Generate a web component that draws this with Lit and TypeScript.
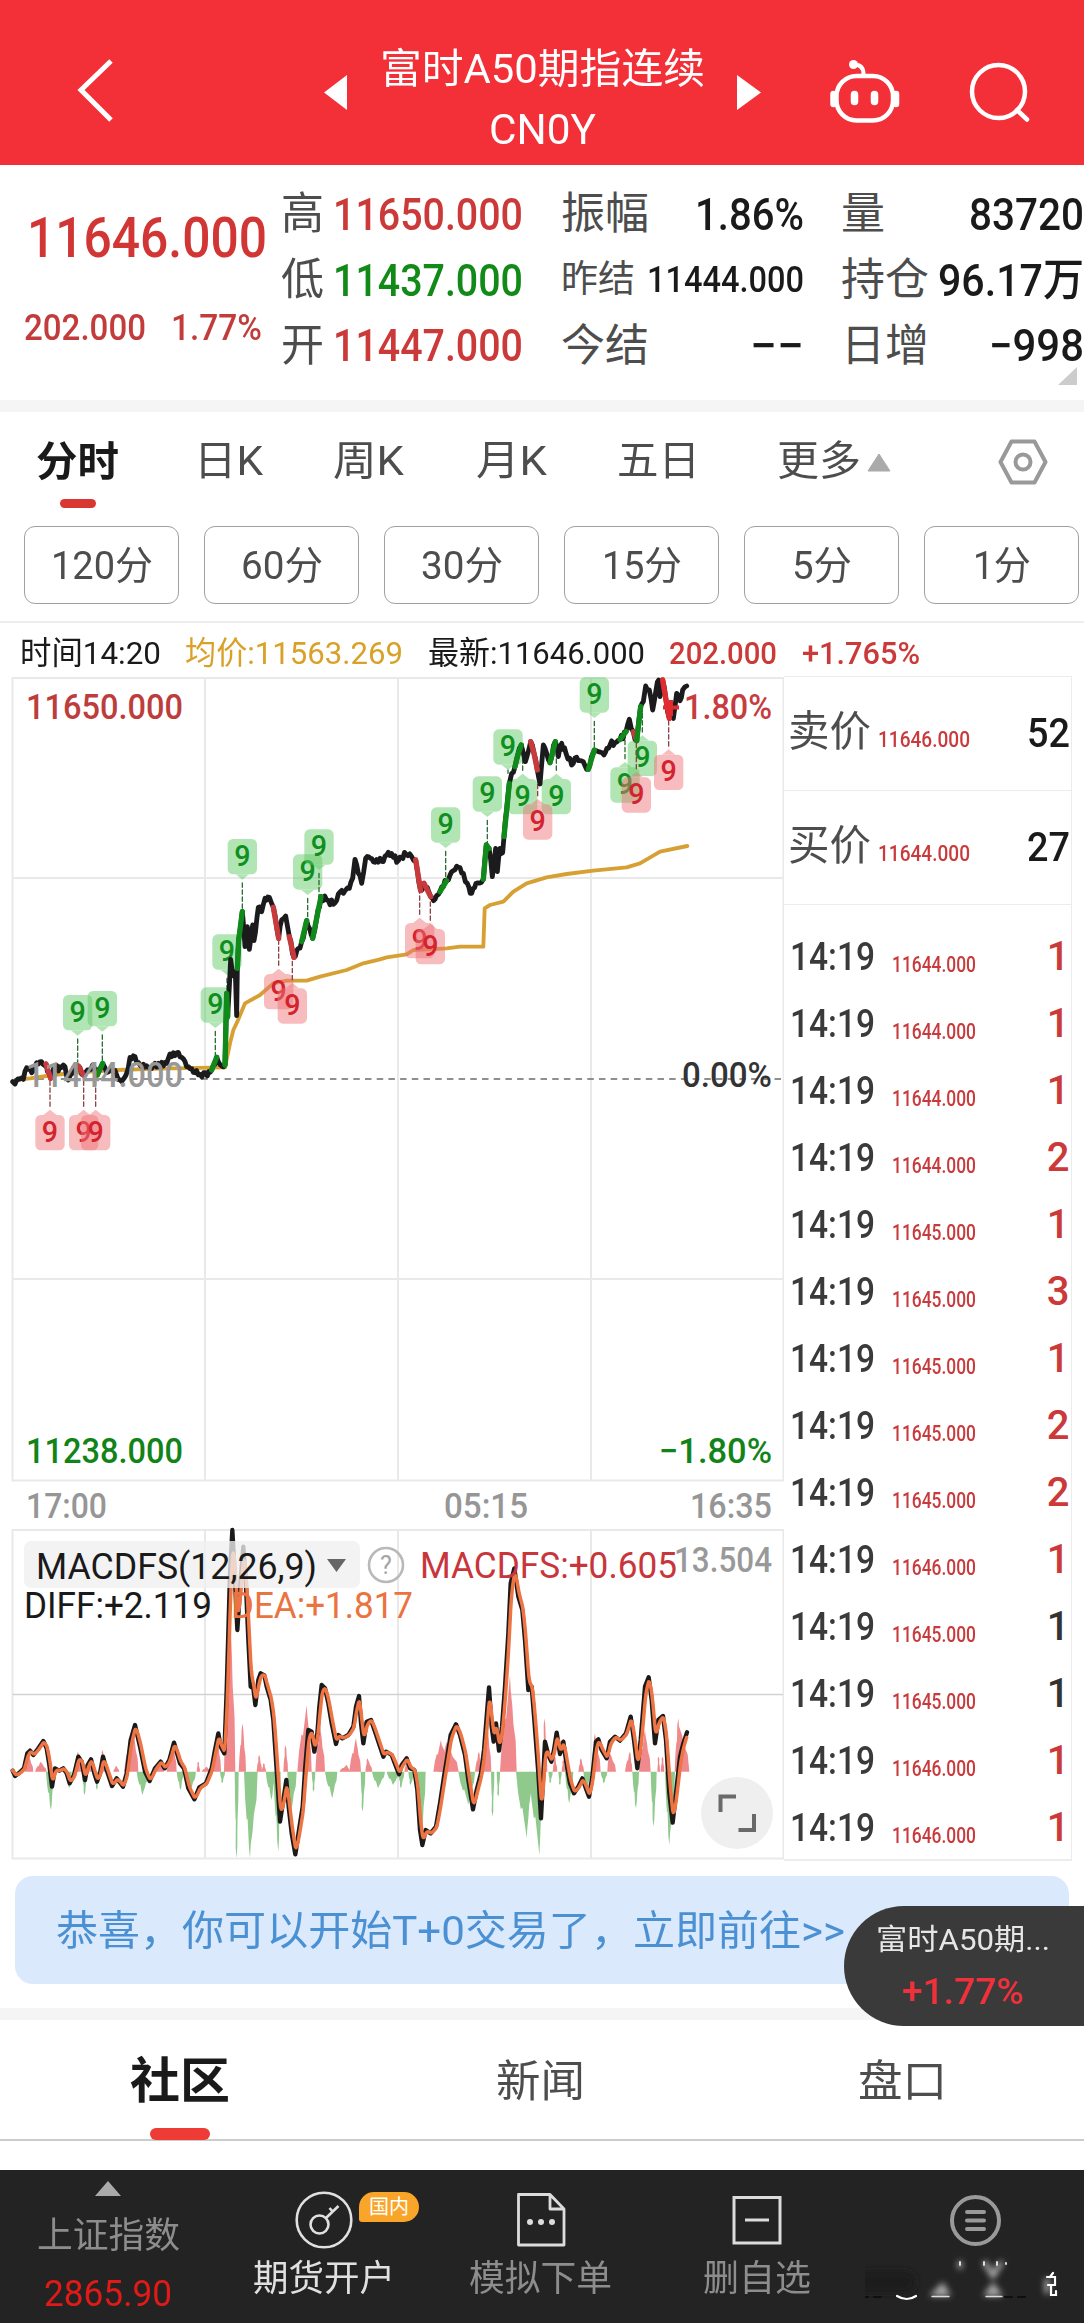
import { LitElement, html, svg, css } from "lit";
import { customElement, property } from "lit/decorators.js";

type P = [number, number];

/** A single line of text condensed or widened to an exact width. */
@customElement("fit-text")
class FitText extends LitElement {
  @property({ type: Number }) w = 100;
  @property() text = "";
  static styles = css`
    :host { display: block; white-space: pre; flex: none; line-height: 1.2; }
    .t { display: inline-block; transform-origin: 0 50%; vertical-align: top; }
  `;
  render() {
    return html`<span class="t">${this.text}</span>`;
  }
  updated() {
    this.style.width = this.w + "px";
    const t = this.renderRoot.querySelector(".t") as HTMLElement;
    t.style.transform = "none";
    const n = t.getBoundingClientRect().width;
    if (n) t.style.transform = `scaleX(${this.w / n})`;
  }
}

const pts = (s: string, dx = 0, dy = 0): P[] =>
  s.trim().split(/\s+/).map((p) => {
    const [x, y] = p.split(",").map(Number);
    return [x + dx, y + dy];
  });

const toPath = (a: P[]) => "M" + a.map((p) => p[0].toFixed(1) + " " + p[1].toFixed(1)).join("L");

/** Adds small tick-to-tick movement between the sampled prices. */
const ticks = (a: P[], amp: number): P[] => {
  const out: P[] = [];
  let k = 3;
  for (let i = 0; i < a.length - 1; i++) {
    const [x0, y0] = a[i], [x1, y1] = a[i + 1];
    const n = Math.max(1, Math.round((x1 - x0) / 5));
    for (let j = 0; j < n; j++) {
      k = (k * 73 + 41) % 101;
      const d = j === 0 ? 0 : (k / 50 - 1) * amp;
      out.push([x0 + ((x1 - x0) * j) / n, y0 + ((y1 - y0) * j) / n + d]);
    }
  }
  out.push(a[a.length - 1]);
  return out;
};

/* Series are sampled in thirds of a pixel. */
const R = 1140;
const PRICE: P[] = [
  ...pts("38,1235 45,1242 58,1228 70,1228 80,1193 95,1208 105,1190 115,1182 138,1182 152,1225 165,1190 175,1203 195,1190 205,1230 220,1195 235,1188 250,1215 262,1200 278,1185 292,1215 308,1180 320,1207 335,1200 350,1215 365,1235 378,1215 390,1162 405,1160 420,1185 450,1192 475,1180 490,1188 505,1165 520,1148 545,1162 560,1190 580,1207 600,1213 622,1218 635,1200 650,1162 665,1188 675,1185 680,970 683,1040 688,950 692,868 698,915 706,905 710,1037 712,895 716,810 727,725 735,830 742,770 748,838 758,765 762,812 775,712 785,725 795,685 808,682 820,712 836,805 845,750 857,738 868,800 882,862 895,835 905,815 920,752 938,805 950,745 963,680 980,690 1000,703 1015,672 1030,670 1048,655 1058,625 1065,568 1075,610 1085,640 1097,565 1120,575 1140,565"),
  ...pts("10,575 20,555 40,562 55,572 78,552 95,560 107,570 122,662 132,640 152,680 165,688 180,665 200,632 215,605 235,592 250,610 262,640 275,670 288,640 310,628 319,525 327,535 337,620 347,535 352,605 360,535 368,548 372,500 380,420 388,340 395,310 405,290 412,260 424,225 436,275 452,215 462,250 472,300 480,342 490,225 500,250 510,278 526,215 535,260 545,220 558,250 575,285 590,262 610,275 625,298 643,240 655,245 672,255 690,225 720,208 738,185 748,148 760,185 770,212 782,110 790,95 797,48 808,60 818,120 828,60 836,30 840,80 848,30 858,90 868,145 880,145 890,70 900,92 908,60 920,48", R),
];
/** Stretches of the price line with their trend colour. */
const TRENDS: [number, number, string][] = [
  [138, 152, "#c93a3c"], [235, 250, "#c93a3c"], [292, 308, "#118a1c"], [635, 650, "#118a1c"], [675, 683, "#118a1c"],
  [712, 727, "#118a1c"], [820, 836, "#c93a3c"], [868, 882, "#c93a3c"], [905, 920, "#118a1c"], [938, 963, "#118a1c"],
  [R + 107, R + 122, "#c93a3c"], [R + 132, R + 152, "#c93a3c"], [R + 180, R + 200, "#118a1c"], [R + 310, R + 327, "#118a1c"],
  [R + 372, R + 388, "#118a1c"], [R + 405, R + 424, "#118a1c"], [R + 452, R + 472, "#c93a3c"], [R + 510, R + 526, "#118a1c"],
  [R + 625, R + 643, "#118a1c"], [R + 720, R + 738, "#118a1c"], [R + 760, R + 770, "#c93a3c"], [R + 770, R + 782, "#118a1c"],
  [R + 848, R + 868, "#e02c30"],
];
const AVG: P[] = [
  ...pts("60,1228 90,1225 160,1215 250,1206 350,1200 480,1196 675,1192 690,1120 700,1080 712,1055 735,1000 780,975 820,940 860,932 920,932 960,920 1040,900 1090,880 1140,868"),
  ...pts("20,862 80,853 100,840 200,835 240,830 310,830 314,715 330,705 370,695 400,665 440,640 500,622 560,612 640,602 740,592 780,580 840,545 922,528", R),
];

type Badge = [cx: number, top: number, color: "g" | "r", side: "above" | "below", tail: number];
const BADGES: Badge[] = [
  [233, 975, "g", "above", 1180], [307, 963, "g", "above", 1180], [646, 952, "g", "above", 1160], [681, 793, "g", "above", 960],
  [727, 507, "g", "above", 725], [923, 553, "g", "above", 755], [957, 478, "g", "above", 685], [R + 197, 412, "g", "above", 630],
  [R + 322, 319, "g", "above", 520], [R + 384, 178, "g", "above", 300], [R + 643, 22, "g", "above", 235],
  [R + 428, 327, "g", "below", 240], [R + 529, 327, "g", "below", 220], [R + 735, 292, "g", "below", 190], [R + 787, 212, "g", "below", 110],
  [150, 1335, "r", "below", 1230], [251, 1335, "r", "below", 1220], [287, 1335, "r", "below", 1215], [836, 912, "r", "below", 805],
  [877, 955, "r", "below", 860], [R + 119, 759, "r", "below", 665], [R + 151, 777, "r", "below", 685], [R + 473, 403, "r", "below", 310],
  [R + 769, 322, "r", "below", 215], [R + 866, 254, "r", "below", 145],
];

const DY = 2310;
const DIFF: P[] = [
  ...pts("38,992 45,1008 60,997 72,985 82,940 90,932 100,945 115,925 130,903 140,925 148,975 156,1040 165,985 178,992 190,985 200,1000 209,1030 222,1005 235,950 245,965 255,1020 263,975 273,958 283,1000 291,1025 300,1000 309,950 320,990 336,1038 350,1015 369,1040 380,1000 392,900 405,855 420,920 435,995 449,1023 465,985 482,965 494,985 508,960 522,908 540,970 552,985 565,1045 583,1078 598,1042 618,1030 635,985 645,930 655,880 662,920 673,940 680,750 690,400 697,270 703,380 712,570 722,420 730,320 738,440 745,600 752,740 760,745 766,795 775,720 782,700 793,706 800,740 812,780 820,840 830,990 840,1145 850,1080 859,1020 866,1100 875,1180 886,1243 897,1170 908,1100 915,990 925,870 935,875 943,935 952,880 958,800 965,735 975,745 985,790 995,850 1008,912 1015,885 1027,895 1045,885 1060,860 1068,800 1077,768 1083,850 1090,910 1100,845 1113,840 1125,875 1140,920 1150,950 1158,935 1175,945 1190,985 1197,1003", 0, DY),
  ...pts("65,975 80,955 90,985 103,990 112,1050 120,1170 127,1215 137,1170 152,1180 168,1160 180,1090 192,1010 205,930 212,885 228,853 240,885 255,945 265,1020 279,1108 290,1050 303,1000 312,930 320,830 327,742 335,860 341,905 348,850 357,932 366,860 375,740 385,580 392,430 403,385 415,470 427,510 435,600 445,750 455,740 463,840 475,1000 483,1135 490,1000 495,905 505,945 514,965 522,930 530,878 540,942 550,905 560,975 570,1030 582,1060 595,1040 607,1015 616,1040 627,1070 637,1010 648,905 655,898 665,930 680,955 690,905 705,890 720,902 738,880 752,830 762,900 772,985 782,900 795,740 806,712 815,780 825,910 835,840 849,828 858,900 868,1060 878,1148 888,1060 900,950 910,910 921,877", R, DY),
];
/** Signal line: exponential average of DIFF. */
const DEA: P[] = (() => {
  const out: P[] = [];
  let i = 0, e = DIFF[0][1];
  for (let x = DIFF[0][0]; x <= R + 921; x += 2) {
    while (i < DIFF.length - 2 && DIFF[i + 1][0] < x) i++;
    const [x0, y0] = DIFF[i], [x1, y1] = DIFF[i + 1];
    e += 0.34 * (y0 + ((y1 - y0) * (x - x0)) / (x1 - x0) - e);
    out.push([x, e]);
  }
  return out;
})();
/** Histogram lobes: start, peak, end, extreme value. */
const LOBES = (
  "75,87,100,945 105,123,140,965 138,153,162,1110 200,208,215,1045 222,234,245,935 246,254,262,1065 264,272,280,955 284,291,297,1050 300,308,318,930 340,349,358,978 372,400,415,870 410,428,447,1065 470,482,492,960 500,520,530,905 530,542,550,1050 555,570,588,1058 590,595,600,965 605,620,632,980 632,653,663,890 660,667,675,1030 672,690,706,480 704,710,716,1255 716,728,738,850 732,750,773,1255 770,778,786,945 785,792,798,970 797,815,825,1080 820,835,842,1235 850,857,864,915 862,872,890,1130 892,920,935,795 935,941,946,1055 946,960,975,850 975,997,1012,1075 1018,1040,1050,975 1048,1068,1083,895 1082,1088,1096,1115 1096,1103,1117,955 1116,1135,1155,1045 1160,1180,1200,1035 " +
  "1195,1203,1213,1045 1213,1220,1224,965 1225,1232,1245,1035 1245,1265,1277,1200 1300,1323,1350,900 1315,1340,1376,905 1375,1405,1425,1095 1425,1437,1444,935 1444,1462,1474,850 1473,1478,1483,1130 1490,1495,1500,1070 1500,1530,1550,705 1548,1580,1595,1195 1588,1618,1628,1245 1628,1634,1642,835 1645,1651,1658,1030 1658,1665,1672,950 1675,1680,1685,1035 1685,1690,1696,960 1695,1708,1720,1090 1735,1743,1752,955 1750,1762,1772,1050 1775,1785,1802,880 1802,1812,1822,1030 1822,1828,1848,930 1875,1890,1897,935 1897,1908,1917,1105 1917,1935,1952,870 1952,1961,1970,1160 1972,1976,1980,950 1982,1988,1993,950 1995,2008,2025,1215 2024,2035,2068,835"
).split(" ").map((s) => s.split(",").map(Number));

const ZERO = 995;
const lobePath = ([a, p, b, y]: number[]) => {
  const d = y - ZERO;
  const f = (x: number, k: number) => `${x.toFixed(1)} ${(ZERO + d * k + DY).toFixed(1)}`;
  return `M${f(a, 0)}L${f(a + (p - a) * 0.2, 0.32)}L${f(a + (p - a) * 0.45, 0.56)}L${f(a + (p - a) * 0.6, 0.54)}L${f(p - 3, 0.88)}L${f(p, 1)}L${f(p + 2, 0.85)}L${f(p + (b - p) * 0.35, 0.68)}L${f(p + (b - p) * 0.5, 0.5)}L${f(p + (b - p) * 0.85, 0.32)}L${f(b, 0)}Z`;
};

const label = (s: string, x: number, w: number, cy: number, fill: string, size = 35, weight = 500) =>
  svg`<text x=${x} y=${cy + size * 0.356} textLength=${w} lengthAdjust="spacingAndGlyphs" font-size=${size} font-weight=${weight} fill=${fill}>${s}</text>`;

const badge = ([cx, top, c, side, tail]: Badge) => {
  const fill = c === "g" ? "#5fc964" : "#f07478";
  const ink = c === "g" ? "#0f8f1d" : "#d3232f";
  const b = top + 106;
  const tip = side === "above" ? `M${cx - 20} ${b}L${cx} ${b + 16}L${cx + 20} ${b}Z` : `M${cx - 20} ${top}L${cx} ${top - 16}L${cx + 20} ${top}Z`;
  return svg`
    <path d=${`M${cx} ${side === "above" ? b + 26 : top - 26}V${tail}`} stroke=${c === "g" ? "#2b6e33" : "#8d4449"} stroke-width="4" stroke-dasharray="13 8" fill="none"/>
    <g opacity=".48" fill=${fill}><rect x=${cx - 44} y=${top} width="88" height="106" rx="16"/><path d=${tip}/></g>
    <text x=${cx} y=${top + 80} text-anchor="middle" font-size="86" font-weight="500" fill=${ink}>9</text>`;
};

const t = (text: string, w: number, cls = "") => html`<fit-text class=${cls} .text=${text} .w=${w}></fit-text>`;

@customElement("price-charts")
class PriceCharts extends LitElement {
  static styles = css`
    :host { display: block; width: 784px; height: 1200px; }
    .plot { display: block; font-family: Roboto, "Liberation Sans", sans-serif; }
  `;
  render() {
    const price = ticks(PRICE, 10);
    return html`<svg class="plot" width="784" height="1200" viewBox="0 0 784 1200">
      <g fill="none" stroke="#e9e9e9" stroke-width="2">
        <path d="M12.5 8H783.5V810.5H12.5ZM12.5 860H783.5V1188.5H12.5ZM205 8V810M398 8V810M591 8V810M12.5 208H783M12.5 609H783M205 860V1188M398 860V1188M591 860V1188"/>
        <path d="M12.5 1024.5H783" stroke="#d2d2d2" stroke-width="1.3"/>
      </g>
      <path d="M14 409H783" stroke="#8f8f8f" stroke-width="2" stroke-dasharray="6.5 5.2"/>
      <g transform="scale(.333333)" fill="none" stroke-linejoin="round" stroke-linecap="round">
        <path d=${toPath(AVG)} stroke="#d6a033" stroke-width="11.5"/>
        <g stroke="none">${BADGES.map(badge)}</g>
        <path d=${toPath(price)} stroke="#1b1b1d" stroke-width="14.5"/>
        ${TRENDS.map(([a, b, c]) => svg`<path d=${toPath(PRICE.filter((p) => p[0] >= a && p[0] <= b))} stroke=${c} stroke-width="16"/>`)}
        <g stroke="none">
          ${LOBES.map((l) => svg`<path d=${lobePath(l)} fill=${l[3] < ZERO ? "#f0898c" : "#8fc98c"}/>`)}
        </g>
        <path d=${toPath(DIFF)} stroke="#1c1a19" stroke-width="13"/>
        <path d=${toPath(DEA)} stroke="#ee7444" stroke-width="10.5"/>
      </g>
      ${label("11650.000", 26, 157, 37, "#bd3d3d")}
      ${label("1.80%", 684, 88, 37, "#c73c3e")}
      <path d="M663 37.500H679M671 30V46" stroke="#e02c30" stroke-width="4"/>
      ${label("11444.000", 26, 157, 404.5, "#989898")}
      ${label("0.00%", 682, 90, 404.5, "#333")}
      ${label("11238.000", 26, 157, 781, "#128318")}
      ${label("−1.80%", 659, 113, 781, "#128318")}
      ${label("17:00", 26, 81, 835.5, "#969696")}
      ${label("05:15", 444, 84, 835.5, "#969696")}
      ${label("16:35", 690, 82, 835.5, "#969696")}
      <rect x="24" y="871" width="336" height="47" rx="7" fill="#efefef" opacity=".78"/>
      ${label("MACDFS(12,26,9)", 36, 281, 896, "#1a1a1a", 36, 400)}
      <path d="M327 889H346L336.500 902Z" fill="#666"/>
      <circle cx="386" cy="895" r="17" fill="none" stroke="#b9b9b9" stroke-width="2.600"/>
      <text x="386" y="904" text-anchor="middle" font-size="25" fill="#a5a5a5">?</text>
      ${label("13.504", 674, 98, 889.5, "#999")}
      ${label("MACDFS:+0.605", 420, 257, 895, "#c8363c", 36, 400)}
      ${label("DIFF:+2.119", 24, 188, 935.5, "#1a1a1a", 36, 400)}
      ${label("DEA:+1.817", 231, 182, 935.5, "#ea7340", 36, 400)}
      <circle cx="737" cy="1143" r="36" fill="#efefef"/>
      <path d="M720.500 1142V1126.500H736M754 1144V1160H738.500" fill="none" stroke="#6a6a6a" stroke-width="4"/>
    </svg>`;
  }
}

const TRADES: [string, number, boolean][] = [
  ["11644.000", 1, true], ["11644.000", 1, true], ["11644.000", 1, true], ["11644.000", 2, true],
  ["11645.000", 1, true], ["11645.000", 3, true], ["11645.000", 1, true], ["11645.000", 2, true],
  ["11645.000", 2, true], ["11646.000", 1, true], ["11645.000", 1, false], ["11645.000", 1, false],
  ["11646.000", 1, true], ["11646.000", 1, true],
];

@customElement("app-root")
class AppRoot extends LitElement {
  static styles = css`
    :host { display: block; width: 1084px; height: 2323px; overflow: hidden; background: #fff; position: relative;
      font-family: Roboto, "Noto Sans CJK SC", sans-serif; color: #1a1a1a; }
    * { box-sizing: border-box; }
    .row { display: flex; align-items: center; }
    .red { color: #cb3938; } .green { color: #128a17; } .dark { color: #333; }
    header { height: 164.500px; background: #f32f38; color: #fff; display: grid; grid-template-columns: 324px 437px 323px; padding-top: 40px; }
    header svg { display: block; }
    .title { display: grid; grid-template-columns: 24px 1fr 24px; align-items: start; }
    .arrow { margin-top: 35px; }
    .names { display: flex; flex-direction: column; align-items: center; padding-top: 1px; }
    .name { font-size: 41px; line-height: 56px; }
    .code { font-size: 42px; line-height: 56px; margin-top: 5px; }
    .quote { height: 235.500px; display: grid; grid-template-columns: 281px 280px 280px 243px; position: relative; }
    .last { padding: 36px 0 0 27px; }
    .big { font-size: 56px; line-height: 74px; font-weight: 500; color: #d13534; }
    .chg { font-size: 37px; line-height: 40px; margin-top: 31px; margin-left: -3px; gap: 25px; color: #c23c3c; font-weight: 500; }
    .col { padding-top: 17.500px; }
    .line { display: flex; justify-content: space-between; align-items: center; height: 65.700px; }
    .c1 { width: 242px; } .c2 { width: 243px; } .c3 { width: 243px; }
    .lab { font-size: 44px; color: #4d4d4d; } .lab-s { font-size: 37px; color: #4d4d4d; }
    .val { font-size: 45px; font-weight: 500; } .val-s { font-size: 37px; font-weight: 500; }
    .corner { position: absolute; right: 7px; bottom: 15px; }
    .gap { height: 12px; background: #f5f5f5; }
    .tabs { height: 108px; display: grid; grid-template-columns: 158px 139px 143px 141px 160px 221px 60px; padding-left: 36px; align-items: start; font-size: 41px; color: #4d4d4d; }
    .tab { height: 99px; display: flex; align-items: center; position: relative; }
    .tab.on { height: 96px; color: #1a1a1a; font-weight: 700; flex-direction: column; align-items: flex-start; justify-content: flex-end; }
    .tab.on .bar { width: 36px; height: 9px; border-radius: 5px; background: #d93832; margin: 12px 0 0 24px; }
    .mins { display: flex; gap: 25px; padding: 6px 0 0 24px; height: 102.500px; border-bottom: 2px solid #ededed; }
    .min { width: 155px; height: 78px; flex: none; border: 1.500px solid #a0a0a0; border-radius: 11px; display: flex; align-items: center; justify-content: center; font-size: 39px; color: #4d4d4d; padding-top: 3px; }
    .info { height: 47.500px; padding: 11px 0 0 20px; display: grid; grid-template-columns: 165px 243px 241px 133px 1fr; font-size: 32px; line-height: 38px; font-weight: 500; }
    .info .n { font-weight: 400; }
    .avg { color: #d9a128; }
    .market { display: flex; height: 1200px; }
    .book { width: 288px; margin-top: 6px; height: 1185px; border: 1px solid #ececec; border-bottom-width: 2px; border-left: none; }
    .side { height: 114px; border-bottom: 1px solid #ececec; display: grid; grid-template-columns: 92px 1fr 44px; padding: 0 0 0 4px; align-items: center; }
    .s-lab { font-size: 42px; color: #4d4d4d; margin-top: -2px; } .s-pr { font-size: 22px; margin-top: 14px; color: #c83a3c; font-weight: 500; margin-left: -2px; } .s-q { font-size: 41px; font-weight: 500; }
    .deals { padding-top: 19.500px; }
    .deal { height: 67px; display: grid; grid-template-columns: 102px 1fr 24px; align-items: center; padding: 0 1px 0 6px; }
    .d-t { font-size: 38px; color: #3a3a3a; font-weight: 500; } .d-p { font-size: 21.500px; color: #c83a3c; margin-top: 13px; font-weight: 500; }
    .d-q { font-size: 40px; font-weight: 500; text-align: center; line-height: 48px; margin-top: -2px; }
    .banner { margin: 6px 15px 24px; height: 108px; border-radius: 18px; background: #dae9fc; display: flex; align-items: center; padding: 3px 0 0 41px; font-size: 41px; color: #4a90d3; }
    .subs { height: 121px; border-bottom: 2px solid #ccc; display: grid; grid-template-columns: 360px 361px 363px; justify-items: center; font-size: 44px; color: #4d4d4d; }
    .sub { height: 120px; padding-top: 36px; }
    .sub.on { font-size: 49px; font-weight: 700; color: #1a1a1a; display: flex; flex-direction: column; align-items: center; padding-top: 33px; }
    .sub .bar { width: 60px; height: 12px; border-radius: 6px; background: #ee3b35; margin-top: 16px; }
    footer { margin-top: 29px; height: 153px; background: #232323; display: grid; grid-template-columns: 216px 216px 217px 216px 219px; font-size: 36px; color: #8d8d8d; }
    .f { display: flex; flex-direction: column; align-items: center; position: relative; }
    .f svg { display: block; }
    .f .ft { margin-top: 4px; line-height: 44px; }
    .lit { color: #e0e0e0; }
    .f .idx { color: #df1a17; font-size: 37px; line-height: 44px; margin-top: 14px; }
    .tag { position: absolute; left: 143px; top: 21.500px; width: 60px; height: 30px; border-radius: 15px 15px 15px 3px; background: #f9a52a; color: #fff; font-size: 20px; display: flex; align-items: center; justify-content: center; }
    .float { position: absolute; right: 0; top: 1906px; width: 240px; height: 120px; border-radius: 60px 0 0 60px; background: #3a3a3a; color: #e6e6e6; padding: 14px 0 0 32px; }
    .f-name { font-size: 29px; line-height: 40px; }
    .f-chg { font-size: 37px; line-height: 44px; color: #f0313b; margin: 10px 0 0 26px; font-weight: 500; }
  `;

  render() {
    return html`
      <header>
        <svg width="140" height="90"><path d="M111 21L81 50L111 80" fill="none" stroke="#fff" stroke-width="5"/></svg>
        <div class="title">
          <svg class="arrow" width="24" height="35"><path d="M0 17.500L23 0V35Z" fill="#fff"/></svg>
          <div class="names">${t("富时A50期指连续", 325, "name")}${t("CN0Y", 107, "code")}</div>
          <svg class="arrow" width="24" height="35"><path d="M24 17.500L0 0V35Z" fill="#fff"/></svg>
        </div>
        <svg width="323" height="110" viewBox="-59 0 323 110" fill="none" stroke="#fff" stroke-linecap="round">
          <rect x="16.500" y="36" width="56.500" height="44.500" rx="20" stroke-width="4.500"/>
          <path d="M13.500 54V64M76 54V64" stroke-width="6.500"/>
          <path d="M34.500 54.500V61.500M54.500 54.500V61.500" stroke-width="7.500" />
          <path d="M34 24.500C41 24.500 43.500 28 43.500 34" stroke-width="4"/>
          <circle cx="33.500" cy="24.500" r="4.500" fill="#fff" stroke="none"/>
          <circle cx="178.500" cy="51.500" r="26.500" stroke-width="4.500"/>
          <path d="M197 70L207 79.500" stroke-width="4.500"/>
        </svg>
      </header>

      <section class="quote">
        <div class="last">
          ${t("11646.000", 240, "big")}
          <div class="row chg">${t("202.000", 122)}${t("1.77%", 91)}</div>
        </div>
        <div class="col c1">
          <div class="line">${t("高", 43, "lab")}${t("11650.000", 190, "val red")}</div>
          <div class="line">${t("低", 43, "lab")}${t("11437.000", 190, "val green")}</div>
          <div class="line">${t("开", 43, "lab")}${t("11447.000", 190, "val red")}</div>
        </div>
        <div class="col c2">
          <div class="line">${t("振幅", 88, "lab")}${t("1.86%", 109, "val")}</div>
          <div class="line">${t("昨结", 74, "lab-s")}${t("11444.000", 157, "val-s")}</div>
          <div class="line">${t("今结", 88, "lab")}${t("−−", 54, "val")}</div>
        </div>
        <div class="col c3">
          <div class="line">${t("量", 44, "lab")}${t("83720", 115, "val")}</div>
          <div class="line">${t("持仓", 88, "lab")}${t("96.17万", 146, "val")}</div>
          <div class="line">${t("日增", 88, "lab")}${t("−998", 95, "val")}</div>
        </div>
        <svg class="corner" width="19" height="18"><path d="M19 0V18H0Z" fill="#ccc"/></svg>
      </section>
      <div class="gap"></div>

      <nav class="tabs">
        <div class="tab on">${t("分时", 83)}<div class="bar"></div></div>
        <div class="tab">${t("日K", 69)}</div>
        <div class="tab">${t("周K", 71)}</div>
        <div class="tab">${t("月K", 71)}</div>
        <div class="tab">${t("五日", 83)}</div>
        <div class="tab">${t("更多", 84)}<svg width="36" height="20"><path d="M7 19L18 2L29 19Z" fill="#aaa" stroke="#aaa" stroke-linejoin="round"/></svg></div>
        <div class="tab"><svg width="50" height="48" viewBox="0 0 50 48" fill="none" stroke="#999" stroke-width="4" stroke-linejoin="round"><path d="M13.500 3.500H36.500L47.500 24L36.500 44.500H13.500L2.500 24Z"/><circle cx="25" cy="24" r="7.500"/></svg></div>
      </nav>
      <div class="mins">
        ${([["120分", 102], ["60分", 82], ["30分", 82], ["15分", 80], ["5分", 60], ["1分", 58]] as [string, number][]).map(
          ([s, w]) => html`<div class="min">${t(s, w)}</div>`
        )}
      </div>
      <div class="info">
        ${t("时间14:20", 141, "n")}${t("均价:11563.269", 218, "avg n")}${t("最新:11646.000", 217, "n")}${t("202.000", 108, "red")}${t("+1.765%", 118, "red")}
      </div>

      <section class="market">
        <price-charts></price-charts>
        <aside class="book">
          ${([["卖价", "11646.000", "52"], ["买价", "11644.000", "27"]]).map(
            ([l, p, q]) => html`<div class="side">${t(l, 83, "s-lab")}${t(p, 92, "s-pr")}${t(q, 43, "s-q")}</div>`
          )}
          <div class="deals">
            ${TRADES.map(
              ([p, q, up]) => html`<div class="deal">${t("14:19", 85, "d-t")}${t(p, 84, "d-p")}<span class="d-q ${up ? "red" : "dark"}">${q}</span></div>`
            )}
          </div>
        </aside>
      </section>

      <div class="banner">${t("恭喜，你可以开始T+0交易了，立即前往>>", 789)}</div>
      <div class="gap"></div>
      <nav class="subs">
        <div class="sub on">${t("社区", 100)}<div class="bar"></div></div>
        <div class="sub">${t("新闻", 89)}</div>
        <div class="sub">${t("盘口", 89)}</div>
      </nav>

      <footer>
        <div class="f">
          <svg width="28" height="40"><path d="M1 26L14 11L27 26Z" fill="#aaa"/></svg>
          ${t("上证指数", 143, "ft")}${t("2865.90", 128, "idx")}
        </div>
        <div class="f">
          <svg width="70" height="83" viewBox="-35 -50 70 83" fill="none" stroke="#e0e0e0" stroke-width="2.600">
            <circle r="27.300"/><circle cx="-4.500" cy="4.500" r="9"/><path d="M2 -2L14.500 -14M5.500 -12L9.500 -7.500"/>
          </svg>
          <div class="tag">${t("国内", 40)}</div>
          ${t("期货开户", 142, "ft lit")}
        </div>
        <div class="f">
          <svg width="50" height="83" viewBox="0 0 50 83" fill="none" stroke="#dcdcdc" stroke-width="2.800" stroke-linejoin="round">
            <path d="M2.500 24.500H34L48 39V75H2.500ZM34 24.500V39H48"/><g fill="#dcdcdc" stroke="none"><circle cx="14" cy="52" r="3"/><circle cx="25" cy="52" r="3"/><circle cx="36" cy="52" r="3"/></g>
          </svg>
          ${t("模拟下单", 143, "ft")}
        </div>
        <div class="f">
          <svg width="50" height="83" viewBox="0 0 50 83" fill="none" stroke="#dcdcdc" stroke-width="3"><path d="M2 27.500H48V73H2ZM13 50H37"/></svg>
          ${t("删自选", 108, "ft")}
        </div>
        <div class="f">
          <svg width="219" height="153" viewBox="0 0 219 153" fill="none" stroke-linecap="round">
            <defs><filter id="soft" x="-50%" y="-50%" width="200%" height="200%"><feGaussianBlur stdDeviation="3"/></filter></defs>
            <circle cx="110.500" cy="50.500" r="23.500" stroke="#999" stroke-width="4"/>
            <path d="M102 42H119M102 50.500H119M102 59H119" stroke="#999" stroke-width="4"/>
            <g filter="url(#soft)">
              <path d="M-18 112H40" stroke="#1e1e1e" stroke-width="22"/>
              <path d="M64 126H86L78 112ZM118 126H138L128 112Z" fill="#aaa"/>
              <path d="M95 93V97M120 93L128 106L136 93M182 110V122" stroke="#ccc" stroke-width="4"/>
            </g>
            <path d="M95 92V95M119 92V95M132 92V95M141 93V94" stroke="#ddd" stroke-width="2"/>
            <path d="M32 126Q42 132 51 126M188 103L185 107M182 107H190V115H183M186 115V125H191V121" stroke="#fff" stroke-width="2.200"/>
            <path d="M67 126.500H84M121 126.500H137" stroke="#ddd" stroke-width="1.300"/>
            <path d="M140 127H166M-30 127H18" stroke="#0f0f0f" stroke-width="2" stroke-dasharray="7 6"/>
          </svg>
        </div>
      </footer>

      <div class="float">${t("富时A50期...", 174, "f-name")}${t("+1.77%", 122, "f-chg")}</div>
    `;
  }
}
